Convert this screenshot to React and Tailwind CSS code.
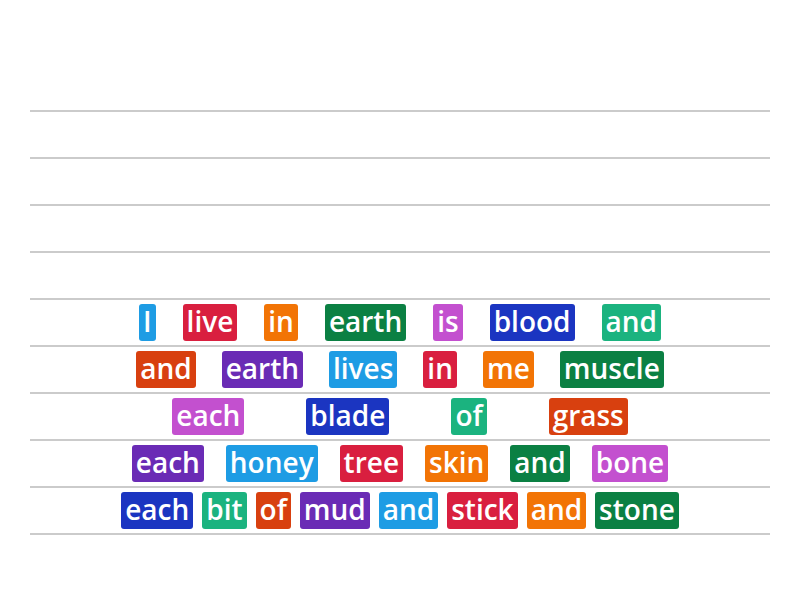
const palette = [
  "bg-[#1e9ce4]",
  "bg-[#d91f3f]",
  "bg-[#f27405]",
  "bg-[#0b8043]",
  "bg-[#c350cf]",
  "bg-[#1b35c1]",
  "bg-[#1bb37f]",
  "bg-[#d8400f]",
  "bg-[#6a2bb5]",
];

const rows = [
  { gap: "gap-[27px]", words: ["I", "live", "in", "earth", "is", "blood", "and"] },
  { gap: "gap-[26px]", words: ["and", "earth", "lives", "in", "me", "muscle"] },
  { gap: "gap-[62px]", words: ["each", "blade", "of", "grass"] },
  { gap: "gap-[22px]", words: ["each", "honey", "tree", "skin", "and", "bone"] },
  { gap: "gap-[9px]", words: ["each", "bit", "of", "mud", "and", "stick", "and", "stone"] },
];

const Tile = ({ word, color }) => (
  <div
    className={`${color} flex h-[37px] items-center rounded-[3px] px-[4px] pb-[3px] text-[28px] leading-none font-semibold text-white`}
  >
    {word}
  </div>
);

const App = () => {
  let idx = 0;
  return (
    <div
      className="h-[600px] w-[800px] bg-white"
      style={{ fontFamily: '"Open Sans", "Noto Sans", sans-serif' }}
    >
      <div className="mx-[30px] pt-[110px]">
        <div className="border-t-2 border-[#cbcbcb]">
          {[0, 1, 2, 3].map((i) => (
            <div key={i} className="h-[47px] border-b-2 border-[#cbcbcb]" />
          ))}
          {rows.map((row, r) => (
            <div
              key={r}
              className={`flex h-[47px] items-center justify-center border-b-2 border-[#cbcbcb] ${row.gap}`}
            >
              {row.words.map((w, i) => {
                const color = palette[idx % palette.length];
                idx += 1;
                return <Tile key={i} word={w} color={color} />;
              })}
            </div>
          ))}
        </div>
      </div>
    </div>
  );
};

export default App;
